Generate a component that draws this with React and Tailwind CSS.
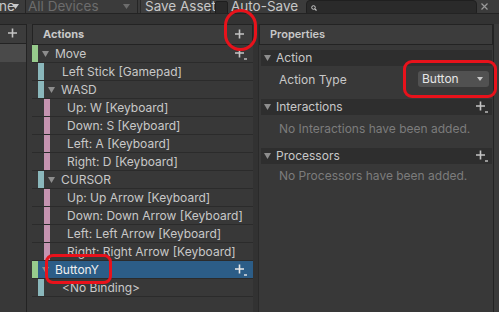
import React from 'react';

const rows = [
  { kind: 'action', label: 'Move', plus: true },
  { kind: 'binding', label: 'Left Stick [Gamepad]' },
  { kind: 'composite', label: 'WASD' },
  { kind: 'part', label: 'Up: W [Keyboard]' },
  { kind: 'part', label: 'Down: S [Keyboard]' },
  { kind: 'part', label: 'Left: A [Keyboard]' },
  { kind: 'part', label: 'Right: D [Keyboard]' },
  { kind: 'composite', label: 'CURSOR' },
  { kind: 'part', label: 'Up: Up Arrow [Keyboard]' },
  { kind: 'part', label: 'Down: Down Arrow [Keyboard]' },
  { kind: 'part', label: 'Left: Left Arrow [Keyboard]' },
  { kind: 'part', label: 'Right: Right Arrow [Keyboard]' },
  { kind: 'action', label: 'ButtonY', plus: true, selected: true },
  { kind: 'binding', label: '<No Binding>' },
];

function Tri({ className = '' }) {
  return (
    <svg width="7" height="6" viewBox="0 0 7 6" className={className}>
      <polygon points="0,0 7,0 3.5,6" fill="#8d8d8d" />
    </svg>
  );
}

function Plus({ dot = false, color = '#c4c4c4' }) {
  return (
    <svg width="12" height="12" viewBox="0 0 12 12">
      <path d="M4.5 0.5v9M0 5h9" stroke={color} strokeWidth="1.6" />
      {dot && <path d="M9 11h3" stroke={color} strokeWidth="1.4" />}
    </svg>
  );
}

function ActionRow({ row }) {
  const { kind, label, plus, selected } = row;
  return (
    <div className="flex h-[18px] border-b border-[#2b2b2b]">
      {kind === 'action' && <div className="w-[6px] bg-[#97cb8c]" />}
      {(kind === 'binding' || kind === 'composite') && (
        <>
          <div className="w-[6px]" />
          <div className="w-[6px] bg-[#8ab7bb]" />
        </>
      )}
      {kind === 'part' && (
        <>
          <div className="w-[12px]" />
          <div className="w-[6px] bg-[#c593b0]" />
        </>
      )}
      <div className={`flex flex-1 items-center ${selected ? 'bg-[#2c5d87] text-[#f0f0f0]' : ''}`}>
        {(kind === 'action' || kind === 'composite') && (
          <>
            <Tri className="ml-[4px]" />
            <span className="ml-[6px]">{label}</span>
          </>
        )}
        {kind === 'binding' && <span className="ml-[18px]">{label}</span>}
        {kind === 'part' && <span className="ml-[17px]">{label}</span>}
        {plus && (
          <div className="ml-auto mr-[6px] flex">
            <Plus dot color={selected ? '#e8e8e8' : '#c4c4c4'} />
          </div>
        )}
      </div>
    </div>
  );
}

function SectionHeader({ title, plus }) {
  return (
    <div className="flex h-[16px] items-center bg-[#2e2e2e]">
      <Tri className="ml-[3px]" />
      <span className="ml-[5px] text-[#c8c8c8]">{title}</span>
      {plus && (
        <div className="ml-auto mr-[4px] flex">
          <Plus dot />
        </div>
      )}
    </div>
  );
}

export default function App() {
  return (
    <div className="relative h-[312px] w-[499px] overflow-hidden bg-[#383838] font-['Inter',sans-serif] text-[12px] text-[#c8c8c8]">
      {/* toolbar */}
      <div className="h-[13px] overflow-hidden bg-[#3b3b3b] text-[13.5px]">
        <div className="-mt-[4px] flex h-[21px] items-center">
          <span className="-ml-[1px] w-[13px] text-[#c8c8c8]">ne</span>
          <svg width="7" height="5" viewBox="0 0 7 5">
            <polygon points="0,0 7,0 3.5,5" fill="#c8c8c8" />
          </svg>
          <div className="ml-[6px] h-full w-[1px] bg-[#252525]" />
          <span className="ml-[2px] w-[95px] whitespace-nowrap text-[#6c6c6c]">All Devices</span>
          <svg width="7" height="5" viewBox="0 0 7 5">
            <polygon points="0,0 7,0 3.5,5" fill="#6c6c6c" />
          </svg>
          <div className="ml-[7px] h-full w-[1px] bg-[#252525]" />
          <div className="ml-[2px] flex h-full w-[71px] items-center whitespace-nowrap border-x border-[#2a2a2a] bg-[#3f3f3f] pl-[4px]">
            Save Asset
          </div>
          <div className="ml-[4px] mt-[2px] h-[14px] w-[13px] shrink-0 rounded-[2px] border border-[#1e1e1e] bg-[#2a2a2a]" />
          <span className="ml-[3px] w-[75px] whitespace-nowrap">Auto-Save</span>
          <div className="mt-[2px] flex h-[16px] w-[171px] items-center rounded-[4px] border border-[#1f1f1f] bg-[#2a2a2a] pl-[4px]">
            <svg width="6" height="6" viewBox="0 0 6 6" className="mt-[1px]">
              <circle cx="2.5" cy="2.5" r="1.8" fill="none" stroke="#c8c8c8" strokeWidth="1" />
              <path d="M3.8 3.8L5.5 5.5" stroke="#c8c8c8" strokeWidth="1.2" />
            </svg>
          </div>
          <svg width="7" height="7" viewBox="0 0 7 7" className="ml-[4px]">
            <path d="M0.5 0.5L6.5 6.5M6.5 0.5L0.5 6.5" stroke="#9a9a9a" strokeWidth="1.2" />
          </svg>
        </div>
      </div>
      <div className="h-[11px] border-t border-[#232323] bg-[#333333]" />

      {/* panes */}
      <div className="flex h-[288px]">
        {/* action maps */}
        <div className="flex w-[26px] flex-col">
          <div className="flex h-[20px] items-center justify-end border-y border-[#232323] bg-[#3c3c3c] pr-[6px]">
            <Plus />
          </div>
          <div className="h-[18px] bg-[#4a4a4a]" />
        </div>
        <div className="w-[6px] border-l border-[#232323]" />

        {/* actions */}
        <div className="flex w-[221px] flex-col">
          <div className="flex h-[21px] items-center border border-[#232323] bg-[#3c3c3c] pl-[10px]">
            <span className="text-[11px] font-bold text-[#c8c8c8]">Actions</span>
            <div className="ml-auto mr-[5px] flex">
              <Plus />
            </div>
          </div>
          {rows.map((row, i) => (
            <ActionRow key={i} row={row} />
          ))}
        </div>
        <div className="w-[6px] border-r border-[#2a2a2a] bg-[#323232]" />

        {/* properties */}
        <div className="flex w-[234px] flex-col">
          <div className="flex h-[21px] items-center border border-[#232323] bg-[#3c3c3c] pl-[10px]">
            <span className="text-[11px] font-semibold text-[#c8c8c8]">Properties</span>
          </div>
          <div className="flex flex-col pl-[2px] pr-[1px] pt-[5px]">
            <SectionHeader title="Action" />
            <div className="flex h-[33px] items-start pt-[5px]">
              <span className="ml-[18px] mt-[1px] leading-[16px]">Action Type</span>
              <div className="ml-auto mr-[3px] flex h-[16px] w-[71px] items-center rounded-[3px] bg-[#515151] pl-[4px] text-[#e6e6e6]">
                Button
                <svg width="6" height="4" viewBox="0 0 6 4" className="ml-auto mr-[6px]">
                  <polygon points="0,0 6,0 3,4" fill="#c8c8c8" />
                </svg>
              </div>
            </div>
            <SectionHeader title="Interactions" plus />
            <div className="h-[33px] pl-[18px] pt-[6px] leading-[16px] text-[#7c7c7c]">
              No Interactions have been added.
            </div>
            <SectionHeader title="Processors" plus />
            <div className="pl-[18px] pt-[4px] leading-[16px] text-[#7c7c7c]">
              No Processors have been added.
            </div>
          </div>
        </div>
        <div className="w-[6px] border-l border-[#232323] bg-[#3a3a3a]" />
      </div>

      {/* annotations */}
      <div className="absolute left-[224px] top-[9px] h-[42px] w-[33px] rounded-full border-[3px] border-[#e8121b]" />
      <div className="absolute left-[403px] top-[60px] h-[38px] w-[94px] rounded-[9px] border-[3px] border-[#e8121b]" />
      <div className="absolute left-[45px] top-[254px] h-[30px] w-[67px] rounded-[8px] border-[3px] border-[#e8121b]" />
    </div>
  );
}
